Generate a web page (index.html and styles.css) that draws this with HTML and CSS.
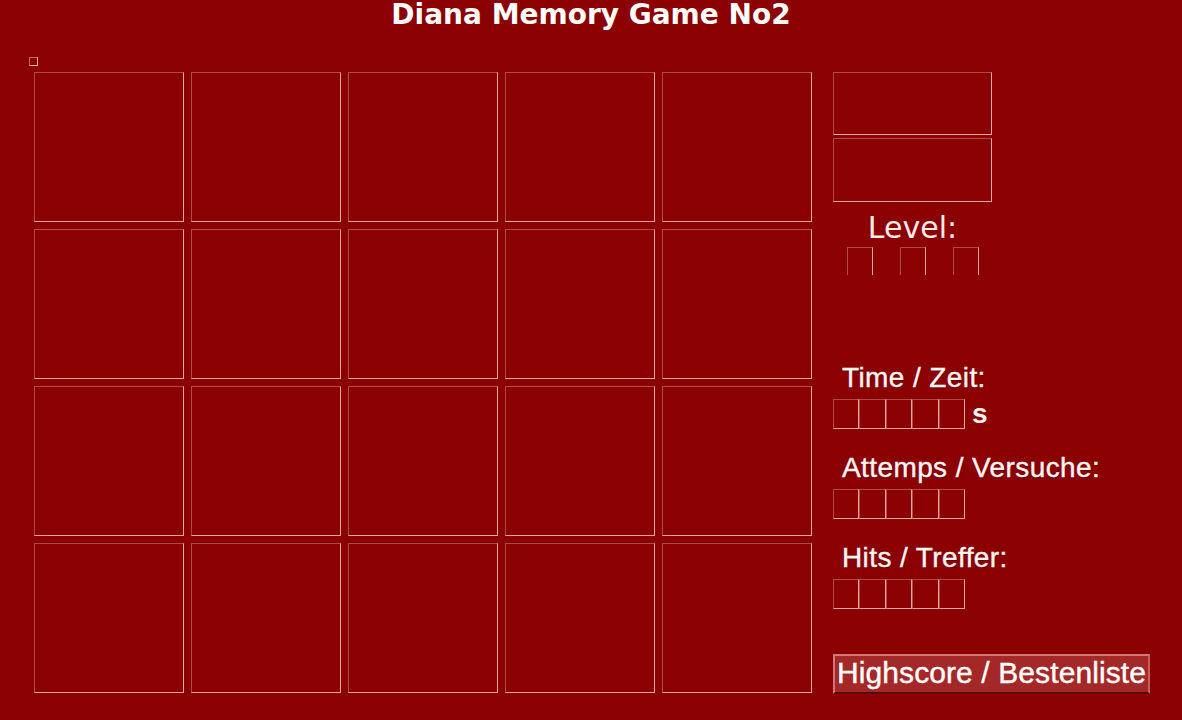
FILE: index.html
```html
<!DOCTYPE html>
<html>
<head>
<meta charset="utf-8">
<title>Diana Memory Game No2</title>
<link rel="stylesheet" href="styles.css">
</head>
<body>
<h1 class="title">Diana Memory Game No2</h1>
<div class="main">
  <div class="left">
    <div class="mini"></div>
    <div class="grid">
      <div class="card"></div><div class="card"></div><div class="card"></div><div class="card"></div><div class="card"></div>
      <div class="card"></div><div class="card"></div><div class="card"></div><div class="card"></div><div class="card"></div>
      <div class="card"></div><div class="card"></div><div class="card"></div><div class="card"></div><div class="card"></div>
      <div class="card"></div><div class="card"></div><div class="card"></div><div class="card"></div><div class="card"></div>
    </div>
  </div>
  <div class="panel">
    <div class="info info-a"></div>
    <div class="info info-b"></div>
    <div class="level-label">Level:</div>
    <div class="level-row">
      <div class="lvl"></div><div class="lvl"></div><div class="lvl"></div>
    </div>
    <div class="label label-time">Time / Zeit:</div>
    <div class="digits">
      <div class="dg"></div><div class="dg"></div><div class="dg"></div><div class="dg"></div><div class="dg"></div>
      <span class="unit">s</span>
    </div>
    <div class="label">Attemps / Versuche:</div>
    <div class="digits">
      <div class="dg"></div><div class="dg"></div><div class="dg"></div><div class="dg"></div><div class="dg"></div>
    </div>
    <div class="label">Hits / Treffer:</div>
    <div class="digits">
      <div class="dg"></div><div class="dg"></div><div class="dg"></div><div class="dg"></div><div class="dg"></div>
    </div>
    <button class="hs">Highscore / Bestenliste</button>
  </div>
</div>
</body>
</html>
```
FILE: styles.css
```css
html, body {
  margin: 0;
  padding: 0;
  background: #8b0000;
  height: 100%;
  overflow: hidden;
}
body {
  color: #fff;
  font-family: "Liberation Sans", Arial, sans-serif;
}
.title {
  margin: 0;
  height: 30px;
  font-family: "DejaVu Sans", Verdana, sans-serif;
  font-weight: bold;
  font-size: 28px;
  line-height: 30px;
  text-align: center;
  color: #fff;
}
.main {
  display: flex;
  padding-left: 29px;
  padding-top: 27px;
}
.left {
  display: flex;
  flex-direction: column;
}
.mini {
  width: 7px;
  height: 7px;
  border: 1px solid;
  border-color: #c06060 #f0b0b0 #f0b0b0 #c06060;
  margin-bottom: 6px;
}
.grid {
  margin-left: 5px;
  display: grid;
  grid-template-columns: repeat(5, 150px);
  grid-auto-rows: 150px;
  gap: 7px;
}
.card, .info, .dg {
  box-sizing: border-box;
  border: 1px solid;
  border-color: #b04a4a #eba4a4 #eba4a4 #b04a4a;
}
.panel {
  margin-left: 21px;
  padding-top: 15px;
  display: flex;
  flex-direction: column;
  width: 320px;
}
.info {
  width: 159px;
  height: 63px;
}
.info-b {
  margin-top: 3px;
  height: 64px;
}
.level-label {
  width: 159px;
  margin-top: 11px;
  font-family: "DejaVu Sans", Verdana, sans-serif;
  font-size: 30px;
  line-height: 30px;
  text-align: center;
  color: #fbeaea;
}
.level-row {
  width: 159px;
  margin-top: 4px;
  padding-left: 14px;
  display: flex;
  gap: 27px;
}
.lvl {
  box-sizing: border-box;
  width: 26px;
  height: 28px;
  border: 1px solid;
  border-bottom: none;
  border-color: #b04a4a #eba4a4 transparent #b04a4a;
}
.label {
  margin-top: 24px;
  padding-left: 9px;
  font-size: 28px;
  letter-spacing: 0.4px;
  line-height: 30px;
  color: #fff4f4;
  -webkit-text-stroke: 0.4px #fff4f4;
  text-shadow: 1px 1px 1px rgba(60, 0, 0, 0.5);
}
.label-time {
  margin-top: 88px;
}
.digits {
  margin-top: 6px;
  display: flex;
  align-items: center;
  height: 30px;
}
.dg {
  width: 26.4px;
  height: 30px;
}
.unit {
  margin-left: 7px;
  font-size: 28px;
  font-weight: bold;
  line-height: 30px;
  color: #fff4f4;
}
.hs {
  align-self: flex-start;
  margin-top: 45px;
  box-sizing: border-box;
  width: 317px;
  height: 40px;
  padding: 0 0 2px 0;
  background: #a42828;
  border: 2px solid;
  border-color: #d07878 #c86060 #5a0a0a #d07878;
  font-family: "Liberation Sans", Arial, sans-serif;
  font-size: 30px;
  letter-spacing: 0.1px;
  line-height: 34px;
  color: #fff;
  text-align: center;
  -webkit-text-stroke: 0.4px #fff;
}
```
